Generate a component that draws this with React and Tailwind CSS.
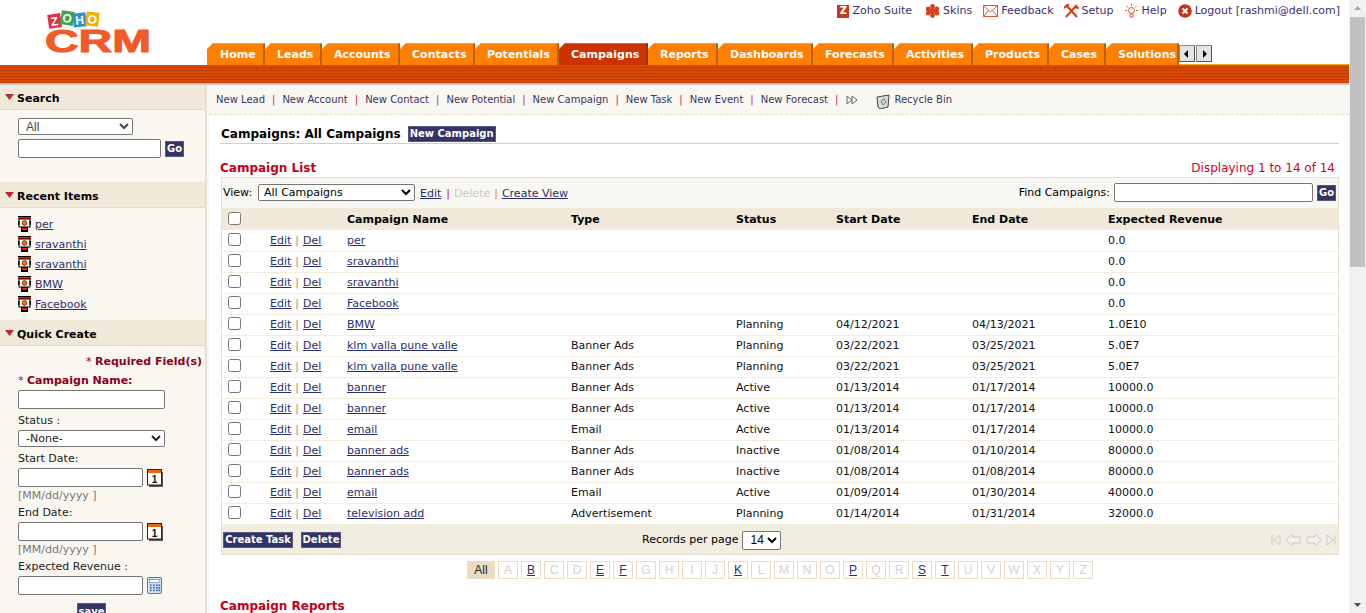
import React from "react";

const tabs = [
  ["Home", 58], ["Leads", 57], ["Accounts", 78], ["Contacts", 75], ["Potentials", 84],
  ["Campaigns", 89], ["Reports", 70], ["Dashboards", 95], ["Forecasts", 81],
  ["Activities", 79], ["Products", 76], ["Cases", 57], ["Solutions", 73],
];

const quickLinks = ["New Lead", "New Account", "New Contact", "New Potential", "New Campaign", "New Task", "New Event", "New Forecast"];

const rows = [
  ["per", "", "", "", "", "0.0"],
  ["sravanthi", "", "", "", "", "0.0"],
  ["sravanthi", "", "", "", "", "0.0"],
  ["Facebook", "", "", "", "", "0.0"],
  ["BMW", "", "Planning", "04/12/2021", "04/13/2021", "1.0E10"],
  ["klm valla pune valle", "Banner Ads", "Planning", "03/22/2021", "03/25/2021", "5.0E7"],
  ["klm valla pune valle", "Banner Ads", "Planning", "03/22/2021", "03/25/2021", "5.0E7"],
  ["banner", "Banner Ads", "Active", "01/13/2014", "01/17/2014", "10000.0"],
  ["banner", "Banner Ads", "Active", "01/13/2014", "01/17/2014", "10000.0"],
  ["email", "Email", "Active", "01/13/2014", "01/17/2014", "10000.0"],
  ["banner ads", "Banner Ads", "Inactive", "01/08/2014", "01/10/2014", "80000.0"],
  ["banner ads", "Banner Ads", "Inactive", "01/08/2014", "01/08/2014", "80000.0"],
  ["email", "Email", "Active", "01/09/2014", "01/30/2014", "40000.0"],
  ["television add", "Advertisement", "Planning", "01/14/2014", "01/31/2014", "32000.0"],
];

const letters = "ABCDEFGHIJKLMNOPQRSTUVWXYZ".split("");
const activeLetters = ["B", "E", "F", "K", "P", "S", "T"];

function Logo() {
  const cubes = [
    ["Z", 3, 5, "#e2304c", -8],
    ["O", 16, 2, "#3fa548", 8],
    ["H", 28, 4, "#2f8fd6", -6],
    ["O", 41, 3, "#f2b100", 6],
  ];
  return (
    <svg width="108" height="52" viewBox="0 0 108 52">
      {cubes.map(([l, x, y, c, r], i) => (
        <g key={i} transform={`rotate(${r} ${x + 6} ${y + 6})`}>
          <rect x={x} y={y} width="13" height="14" fill={c} />
          <text x={x + 6.5} y={y + 11.5} textAnchor="middle" fontSize="12" fontWeight="700" fill="#fff" fontFamily="Liberation Sans, sans-serif">{l}</text>
        </g>
      ))}
      <text x="0" y="43" fontSize="31" fontWeight="700" fill="#f15a29" textLength="106" lengthAdjust="spacingAndGlyphs" fontFamily="Liberation Sans, sans-serif" stroke="#f15a29" strokeWidth="1">CRM</text>
    </svg>
  );
}

function TopLink({ icon, children, className }) {
  return (
    <span className={`flex items-center gap-[3px] ${className}`}>
      {icon}
      <span className="text-[#3b2f73]">{children}</span>
    </span>
  );
}

function CampaignIcon() {
  return (
    <svg width="13" height="16" viewBox="0 0 13 16" className="shrink-0">
      <rect x="0" y="0" width="13" height="1" fill="#000" />
      <rect x="0" y="1" width="13" height="2" fill="#e8200a" />
      <rect x="1" y="3" width="11" height="8" fill="#fff" stroke="#000" />
      <circle cx="6.5" cy="7" r="2.4" fill="#e67a00" stroke="#7a2000" strokeWidth="0.8" />
      <rect x="0" y="5" width="1.5" height="4" fill="#000" />
      <rect x="11.5" y="5" width="1.5" height="4" fill="#000" />
      <rect x="3" y="11" width="7" height="5" fill="#000" />
      <rect x="4" y="12" width="5" height="2" fill="#e8200a" />
    </svg>
  );
}

function CalendarIcon() {
  return (
    <svg width="16" height="18" viewBox="0 0 16 18" className="shrink-0">
      <rect x="2" y="3" width="14" height="15" fill="#555" />
      <rect x="0.5" y="0.5" width="14" height="15.5" fill="#fff" stroke="#222" />
      <rect x="1" y="1" width="13" height="3" fill="#e8641b" />
      <text x="7.5" y="14" textAnchor="middle" fontSize="10" fontWeight="700" fill="#111" fontFamily="Liberation Sans, sans-serif">1</text>
    </svg>
  );
}

function CalculatorIcon() {
  return (
    <svg width="16" height="18" viewBox="0 0 16 18" className="shrink-0">
      <rect x="0.5" y="0.5" width="14" height="16" rx="1.5" fill="#cfe0f7" stroke="#4d7cc4" />
      <rect x="2.5" y="2.5" width="10" height="3" fill="#fff" stroke="#4d7cc4" strokeWidth="0.6" />
      {[7.5, 10, 12.5].map((y) =>
        [3, 6, 9, 11.5].map((x) => <rect key={`${x}-${y}`} x={x} y={y} width="1.6" height="1.6" fill="#39639f" />)
      )}
    </svg>
  );
}

function NavyButton({ children, className = "" }) {
  return (
    <span className={`flex items-center justify-center bg-[#333366] border border-[#5a5a80] text-white font-bold text-[10px] leading-none ${className}`}>
      {children}
    </span>
  );
}

function SideHeader({ children }) {
  return (
    <div className="flex items-center h-[25px] pt-[4px] bg-[#f0e9da] border-b border-[#e8d9bd] pl-[5px] gap-[3px] font-bold text-[11px] text-black">
      <svg width="9" height="6" viewBox="0 0 9 6" className="mb-[4px]"><path d="M0 0H9L4.5 6Z" fill="#c0272d" /></svg>
      <span>{children}</span>
    </div>
  );
}

function Sidebar() {
  const inputCls = "block h-[19px] bg-white border border-[#767676] rounded-[2px]";
  return (
    <aside className="w-[205px] shrink-0 bg-[#faf7f0] text-[11px] text-[#222]">
      <SideHeader>Search</SideHeader>
      <div className="h-[73px] pl-[18px] pt-[8px] border-b border-[#efe8d8]">
        <select className="block w-[115px] h-[17px] bg-white border border-[#767676] rounded-[2px] text-[12px] leading-none pl-[3px] text-[#444] font-['Liberation_Sans',sans-serif]">
          <option>All</option>
        </select>
        <div className="flex items-center gap-[4px] mt-[4px]">
          <input className={`${inputCls} w-[143px]`} />
          <NavyButton className="w-[19px] h-[16px]">Go</NavyButton>
        </div>
      </div>
      <SideHeader>Recent Items</SideHeader>
      <div className="h-[113px] pl-[18px] pt-[6px] border-b border-[#efe8d8]">
        {["per", "sravanthi", "sravanthi", "BMW", "Facebook"].map((n, i) => (
          <div key={i} className="flex items-center gap-[4px] h-[20px]">
            <CampaignIcon />
            <span className="underline text-[#2b2f6e] mt-[2px]">{n}</span>
          </div>
        ))}
      </div>
      <SideHeader>Quick Create</SideHeader>
      <div className="pl-[18px] pt-[7px]">
        <div className="text-right pr-[3px] h-[19px] pt-[1px] font-bold text-[#8b0023]"><span className="font-normal">* </span>Required Field(s)</div>
        <div className="h-[18px] pt-[1px] font-bold text-[#8b0023]"><span className="text-[#3a3a9a] font-normal">* </span>Campaign Name:</div>
        <input className={`${inputCls} w-[147px]`} />
        <div className="h-[21px] leading-[23px]">Status :</div>
        <select className="block w-[147px] h-[17px] bg-white border border-[#767676] rounded-[2px] text-[11px] pl-[3px]">
          <option>-None-</option>
        </select>
        <div className="h-[21px] leading-[23px]">Start Date:</div>
        <div className="flex items-center gap-[4px]"><input className={`${inputCls} w-[125px]`} /><CalendarIcon /></div>
        <div className="h-[17px] leading-[17px] text-[#777]">[MM/dd/yyyy ]</div>
        <div className="h-[18px] leading-[17px]">End Date:</div>
        <div className="flex items-center gap-[4px]"><input className={`${inputCls} w-[125px]`} /><CalendarIcon /></div>
        <div className="h-[17px] leading-[17px] text-[#777]">[MM/dd/yyyy ]</div>
        <div className="h-[18px] leading-[17px]">Expected Revenue :</div>
        <div className="flex items-center gap-[4px]"><input className={`${inputCls} w-[125px]`} /><CalculatorIcon /></div>
        <div className="pl-[59px] pt-[8px]"><NavyButton className="w-[29px] h-[18px]">save</NavyButton></div>
      </div>
    </aside>
  );
}

function PagerIcons() {
  const c = "#c8c8c8";
  return (
    <svg width="65" height="14" viewBox="0 0 65 14" fill="#f4f1e8" stroke={c}>
      <path d="M1 2V12" /><path d="M9 2L3 7L9 12Z" />
      <path d="M15 7L21 1V4H29V10H21V13Z" />
      <path d="M50 7L44 1V4H36V10H44V13Z" />
      <path d="M64 2V12" /><path d="M56 2L62 7L56 12Z" />
    </svg>
  );
}

function CampaignTable() {
  const cell = "pt-[2px]";
  return (
    <div className="border border-[#e8dfca] w-[1118px] text-[11px]">
      {/* view toolbar */}
      <div className="flex items-center h-[30px] bg-[#f9f7f1] pl-[1px] pr-[2px]">
        <span className="w-[35px]">View:</span>
        <select className="w-[157px] h-[17px] mb-[2px] bg-white border border-[#767676] rounded-[2px] text-[11px] pl-[1px] mr-[5px]">
          <option>All Campaigns</option>
        </select>
        <span className="underline text-[#2b2f6e] mt-[2px]">Edit</span>
        <span className="ml-[5px] mr-[4px] mt-[2px] text-[#c2185b]">|</span>
        <span className="text-[#c8c8c8] mt-[2px]">Delete</span>
        <span className="mx-[4px] mt-[2px] text-[#ef8a00]">|</span>
        <span className="underline text-[#2b2f6e] mt-[2px]">Create View</span>
        <span className="ml-auto">Find Campaigns:</span>
        <input className="w-[199px] h-[19px] mb-[2px] ml-[4px] bg-white border border-[#767676] rounded-[2px]" />
        <NavyButton className="w-[19px] h-[16px] ml-[4px]">Go</NavyButton>
      </div>
      <table className="w-full table-fixed">
        <colgroup>
          <col className="w-[48px]" /><col className="w-[77px]" /><col className="w-[224px]" /><col className="w-[165px]" />
          <col className="w-[100px]" /><col className="w-[136px]" /><col className="w-[136px]" /><col />
        </colgroup>
        <thead>
          <tr className="h-[22px] bg-[#f0e9da] text-left font-bold">
            <th className="pl-[6px] pb-[2px]"><input type="checkbox" className="block" /></th>
            <th></th>
            {["Campaign Name", "Type", "Status", "Start Date", "End Date", "Expected Revenue"].map((h) => (
              <th key={h} className={cell}>{h}</th>
            ))}
          </tr>
        </thead>
        <tbody>
          {rows.map((r, i) => (
            <tr key={i} className="h-[21px] bg-white border-b border-[#f3ecdc] text-[#111]">
              <td className="pl-[6px] pb-[2px]"><input type="checkbox" className="block" /></td>
              <td className={cell}>
                <span className="underline text-[#2b2f6e]">Edit</span>
                <span className="mx-[4px] text-[#b98a60]">|</span>
                <span className="underline text-[#2b2f6e]">Del</span>
              </td>
              <td className={cell}><span className="underline text-[#2b2f6e]">{r[0]}</span></td>
              <td className={cell}>{r[1]}</td>
              <td className={cell}>{r[2]}</td>
              <td className={cell}>{r[3]}</td>
              <td className={cell}>{r[4]}</td>
              <td className={cell}>{r[5]}</td>
            </tr>
          ))}
        </tbody>
      </table>
      {/* bottom bar */}
      <div className="flex items-center h-[29px] pt-[2px] bg-[#f1ede1] pl-[1px] pr-[2px]">
        <div className="flex items-center gap-[8px] w-[419px]">
          <NavyButton className="w-[70px] h-[16px]">Create Task</NavyButton>
          <NavyButton className="w-[40px] h-[16px]">Delete</NavyButton>
        </div>
        <span>Records per page</span>
        <select className="w-[39px] h-[19px] ml-[4px] bg-white border border-[#767676] rounded-[2px] text-[12px] pl-[3px] font-['Liberation_Sans',sans-serif]">
          <option>14</option>
        </select>
        <span className="ml-auto"><PagerIcons /></span>
      </div>
    </div>
  );
}

export default function App() {
  return (
    <div className="flex w-[1366px] h-[613px] overflow-hidden bg-white font-['DejaVu_Sans',sans-serif] text-[11px] text-black">
      <div className="w-[1349px] shrink-0 flex flex-col">
        {/* Header */}
        <header className="flex h-[65px] shrink-0">
          <div className="w-[207px] shrink-0 pl-[45px] pt-[9px]"><Logo /></div>
          <div className="flex-1 flex flex-col">
            <div className="flex justify-end h-[43px] pt-[3px] pr-[9px] items-start">
              <TopLink className="mr-[13px]" icon={<span className="flex w-[12px] h-[13px] items-center justify-center bg-[#c4391d] text-white text-[10px] font-bold leading-none">Z</span>}>Zoho Suite</TopLink>
              <TopLink className="mr-[11px]" icon={<svg width="15" height="14" viewBox="0 0 15 14"><g fill="#d4401c"><circle cx="7.5" cy="2.5" r="2.4" /><circle cx="7.5" cy="11.5" r="2.4" /><circle cx="3.2" cy="5" r="2.4" /><circle cx="11.8" cy="5" r="2.4" /><circle cx="3.2" cy="9.2" r="2.4" /><circle cx="11.8" cy="9.2" r="2.4" /><circle cx="7.5" cy="7" r="3" /></g></svg>}>Skins</TopLink>
              <TopLink className="mr-[10px]" icon={<svg width="15" height="12" viewBox="0 0 15 12" fill="none" stroke="#d9593a"><rect x="0.5" y="0.5" width="14" height="11" /><path d="M1 1L7.5 7L14 1M1 11L5.5 5.5M14 11L9.5 5.5" /></svg>}>Feedback</TopLink>
              <TopLink className="mr-[10px]" icon={<svg width="15" height="14" viewBox="0 0 15 14" fill="none" stroke="#cf3a17" strokeWidth="2"><path d="M2 1L13 13" /><path d="M13 1L2 13" /><path d="M0 4L5 0M10 3L15 4" /></svg>}>Setup</TopLink>
              <TopLink className="mr-[11px]" icon={<svg width="15" height="15" viewBox="0 0 15 15" fill="none" stroke="#d9593a"><circle cx="7.5" cy="6.5" r="3" /><path d="M6 10H9V13H6ZM7.5 0V2M1 6.5H3M12 6.5H14M2.5 2L4 3.5M12.5 2L11 3.5" /></svg>}>Help</TopLink>
              <TopLink icon={<svg width="14" height="14" viewBox="0 0 14 14"><circle cx="7" cy="7" r="6.8" fill="#c8321a" /><path d="M4.5 4.5L9.5 9.5M9.5 4.5L4.5 9.5" stroke="#fff" strokeWidth="2" /></svg>}>Logout [rashmi@dell.com]</TopLink>
            </div>
            <nav className="flex h-[22px] items-stretch">
              {tabs.map(([name, w]) => (
                <div
                  key={name}
                  style={{ width: w }}
                  className={`shrink-0 flex items-center pt-[1px] font-bold text-[11px] text-white border-r-2 border-t [clip-path:polygon(6px_0,100%_0,100%_100%,0_100%,0_6px)] ${
                    name === "Home" ? "pl-[13px]" : "pl-[12px]"
                  } ${
                    name === "Campaigns" ? "bg-[#cc3300] border-r-[#96300c] border-t-[#d9644a]" : "bg-[#ff8000] border-r-[#b8620c] border-t-[#ffa23f]"
                  }`}
                >
                  {name}
                </div>
              ))}
              <div className="flex-1 flex items-start gap-[1px] pt-[2px] border-b border-[#f5b000]">
                {["M6 4V12L2 8Z", "M4 4V12L8 8Z"].map((d) => (
                  <span key={d} className="flex items-center justify-center w-[16px] h-[17px] bg-[#e4e4e4] border border-[#555] border-t-[#888] border-l-[#888]">
                    <svg width="10" height="16" viewBox="0 0 10 16"><path d={d} fill="#000" /></svg>
                  </span>
                ))}
              </div>
            </nav>
          </div>
        </header>

        {/* Orange band */}
        <div className="h-[20px] shrink-0 border-b-2 border-[#c4c4c4] bg-[repeating-linear-gradient(to_bottom,#d84a00_0px,#d84a00_2px,#bf3d00_2px,#bf3d00_3px)]" />

        {/* Body */}
        <div className="flex flex-1 min-h-0 bg-white">
          <Sidebar />
          <div className="w-[4px] shrink-0 bg-[#faf7f0] border-l-2 border-[#e8e1d0]" />
          <main className="flex-1 min-w-0">
            <div className="flex items-center h-[30px] pl-[7px] bg-[#f9f7f1] border-b border-dashed border-[#eadfc3] text-[10px] text-[#3a3566]">
              {quickLinks.map((l, i) => (
                <React.Fragment key={l}>
                  <span>{l}</span>
                  <span className={`mx-[7px] ${i % 2 ? "text-[#c2185b]" : "text-[#a8395e]"}`}>|</span>
                </React.Fragment>
              ))}
              <svg width="12" height="10" viewBox="0 0 12 10" fill="none" stroke="#666" className="ml-[1px]"><path d="M1 1L6 5L1 9ZM6 1L11 5L6 9Z" /></svg>
              <svg width="14" height="15" viewBox="0 0 14 15" className="ml-[18px] mr-[4px] mt-[3px]"><path d="M1 3L13 1L12 13L4 15L2 13Z" fill="#d8d8d8" stroke="#444" /><path d="M5 7L8 5L10 8L7 11Z" fill="none" stroke="#4f8f48" /></svg>
              <span>Recycle Bin</span>
            </div>
            <div className="pl-[11px] pt-[5px]">
              <div className="flex items-center gap-[7px] h-[24px] pt-[5px] w-[1119px] border-b border-[#f5cf5f] pl-[1px]">
                <span className="text-[12px] font-bold text-black">Campaigns: All Campaigns</span>
                <NavyButton className="w-[88px] h-[16px]">New Campaign</NavyButton>
              </div>
              <div className="flex items-end justify-between w-[1115px] h-[33px]">
                <span className="text-[12px] font-bold text-[#c4001a]">Campaign List</span>
                <span className="text-[12px] text-[#d4001f]">Displaying 1 to 14 of 14</span>
              </div>
              <div className="pl-[1px]"><CampaignTable /></div>

              {/* alphabet filter */}
              <div className="flex items-center gap-[3px] pl-[247px] mt-[6px] font-['Liberation_Sans',sans-serif] text-[12px]">
                <span className="flex items-center justify-center w-[28px] h-[18px] bg-[#e9dcc3] text-[#222]">All</span>
                {letters.map((l) => (
                  <span key={l} className={`flex items-center justify-center w-[20px] h-[18px] border border-[#eadcc4] ${activeLetters.includes(l) ? "text-[#2b2f6e] underline" : "text-[#d2d2d2]"}`}>{l}</span>
                ))}
              </div>
              <div className="mt-[18px] text-[12px] font-bold text-[#c4001a]">Campaign Reports</div>
            </div>
          </main>
        </div>
      </div>

      {/* Scrollbar */}
      <div className="w-[17px] shrink-0 flex flex-col items-center bg-[#f1f1f1]">
        <svg width="17" height="17" viewBox="0 0 17 17"><path d="M5 10L8.5 6L12 10Z" fill="#a3a3a3" /></svg>
        <div className="w-[15px] h-[250px] bg-[#c1c1c1]" />
        <div className="flex-1" />
        <svg width="17" height="17" viewBox="0 0 17 17"><path d="M5 7L8.5 11L12 7Z" fill="#505050" /></svg>
      </div>
    </div>
  );
}
